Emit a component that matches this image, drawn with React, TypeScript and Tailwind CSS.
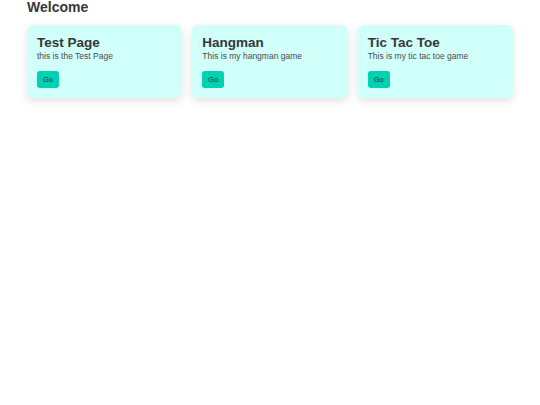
const cards = [
  { title: "Test Page", text: "this is the Test Page" },
  { title: "Hangman", text: "This is my hangman game" },
  { title: "Tic Tac Toe", text: "This is my tic tac toe game" },
];

export default function App() {
  return (
    <div className="min-h-screen bg-white font-['Liberation_Sans',Arial,sans-serif] text-[#363636]">
      <div className="mx-[27px]">
        <h1 className="text-[14px] font-bold leading-[15px]">Welcome</h1>
        <div className="mt-[10px] grid grid-cols-3 gap-[10px]">
          {cards.map((c) => (
            <div
              key={c.title}
              className="h-[73px] rounded-[6px] bg-[#d1fffa] px-[10px] pt-[10px] shadow-[0_3px_8px_rgba(0,0,0,0.12)]"
            >
              <h2 className="text-[13.5px] font-bold leading-[16px]">{c.title}</h2>
              <p className="text-[8.5px] leading-[11px] text-[#4a4a4a]">{c.text}</p>
              <button className="mt-[9px] h-[17px] w-[22px] rounded-[3px] bg-[#00d1b2] text-[7.5px] leading-[17px] text-[#1a3a35]">
                Go
              </button>
            </div>
          ))}
        </div>
      </div>
    </div>
  );
}
